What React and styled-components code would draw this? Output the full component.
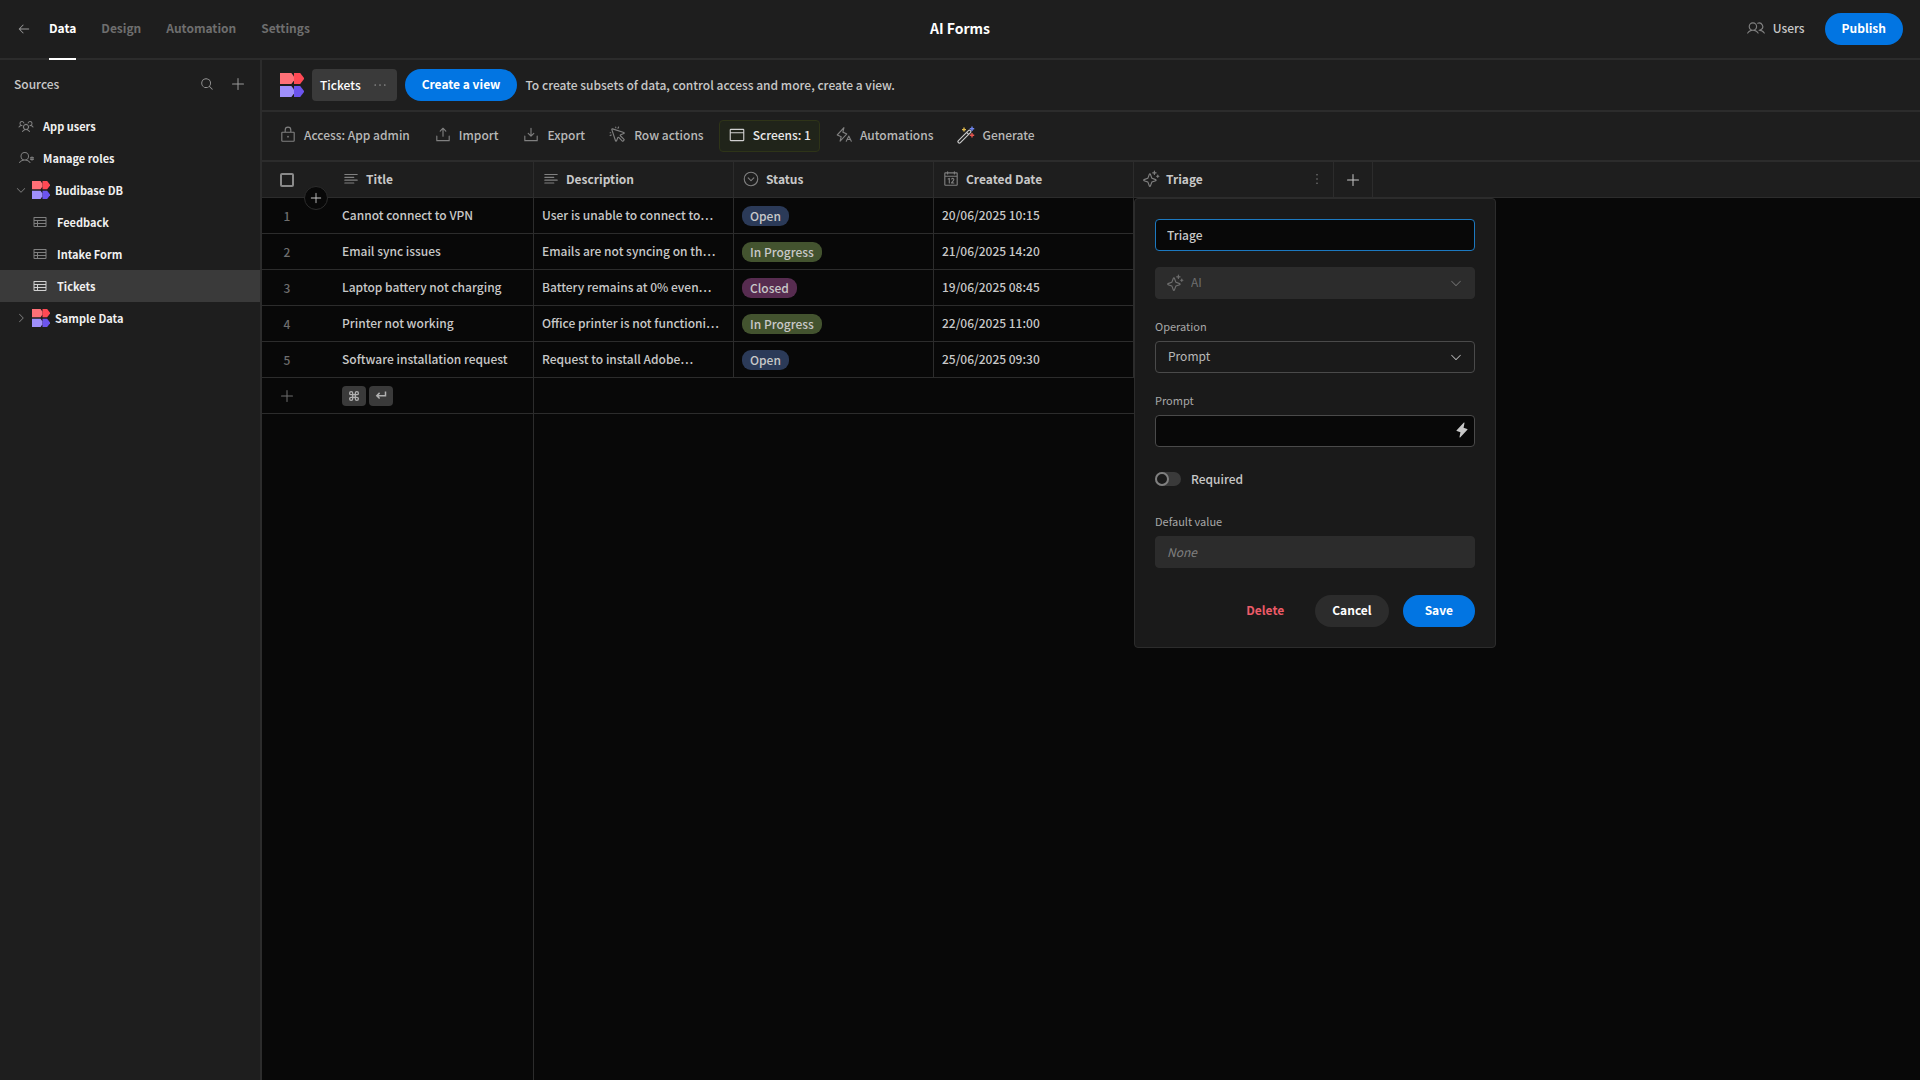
import React, { useState } from "react";
import styled, { createGlobalStyle } from "styled-components";
import {
  PiArrowLeft,
  PiBrowser,
  PiCalendar,
  PiCaretCircleDown,
  PiCaretDown,
  PiCaretRight,
  PiCommandBold,
  PiCursorClick,
  PiDotsThree,
  PiDotsThreeVertical,
  PiDownloadSimple,
  PiLightningA,
  PiLightningFill,
  PiLock,
  PiMagnifyingGlass,
  PiPlus,
  PiSparkle,
  PiTable,
  PiTextAlignLeft,
  PiUploadSimple,
  PiUserGear,
  PiUsers,
  PiUsersThree,
} from "react-icons/pi";

const tabs = ["Data", "Design", "Automation", "Settings"];

const tables = ["Feedback", "Intake Form", "Tickets"];

const rows = [
  {
    title: "Cannot connect to VPN",
    description: "User is unable to connect to…",
    status: "Open",
    created: "20/06/2025 10:15",
  },
  {
    title: "Email sync issues",
    description: "Emails are not syncing on th…",
    status: "In Progress",
    created: "21/06/2025 14:20",
  },
  {
    title: "Laptop battery not charging",
    description: "Battery remains at 0% even…",
    status: "Closed",
    created: "19/06/2025 08:45",
  },
  {
    title: "Printer not working",
    description: "Office printer is not functioni…",
    status: "In Progress",
    created: "22/06/2025 11:00",
  },
  {
    title: "Software installation request",
    description: "Request to install Adobe…",
    status: "Open",
    created: "25/06/2025 09:30",
  },
];

const statusColors = {
  Open: "#2b3a58",
  "In Progress": "#43532f",
  Closed: "#572c50",
};

const Logo = ({ size }) => (
  <svg width={size} height={size} viewBox="0 0 24 24" aria-hidden="true">
    <path d="M0 0h11.4l2.6 3.6v3.8L11.4 11H0z" fill="#ff7077" />
    <path d="M14 0h6.2L24 5v1l-3.8 5H14z" fill="#ff4954" />
    <path d="M0 13h11.4l2.6 3.6v3.8L11.4 24H0z" fill="#9f8ffb" />
    <path d="M14 13h6.2l3.8 5v1l-3.8 5H14z" fill="#6c54ee" />
  </svg>
);

const ReturnKey = () => (
  <svg width="14" height="14" viewBox="0 0 14 14" fill="none" aria-hidden="true">
    <path
      d="M11.5 2.5v4.2H2.8M5.6 3.9 2.8 6.7l2.8 2.8"
      stroke="currentColor"
      strokeWidth="1.5"
    />
  </svg>
);

const MagicWand = () => (
  <svg width="18" height="18" viewBox="0 0 18 18" fill="none" aria-hidden="true">
    <path
      d="M1.4 14.6 11.4 4.6a1.4 1.4 0 0 1 2 2L3.4 16.6a1.4 1.4 0 0 1-2-2zM9.6 6.4l2 2"
      stroke="#c8c8c8"
      strokeWidth="1.2"
    />
    <path d="M7 1.6v4M5 3.6h4" stroke="#e0b84c" strokeWidth="1.4" />
    <path d="M15 .6v4.4M12.8 2.8h4.4" stroke="#6f86f0" strokeWidth="1.4" />
    <path d="M15 7v4.4M12.8 9.2h4.4" stroke="#e8554e" strokeWidth="1.4" />
  </svg>
);

const TopBar = () => (
  <Header>
    <TopNav>
      <IconButton aria-label="Back">
        <PiArrowLeft size={14} />
      </IconButton>
      {tabs.map((tab) => (
        <Tab key={tab} href="#" $active={tab === "Data"}>
          {tab}
        </Tab>
      ))}
    </TopNav>
    <AppTitle>AI Forms</AppTitle>
    <TopActions>
      <UsersButton>
        <PiUsers size={18} />
        <span>Users</span>
      </UsersButton>
      <Button $variant="primary">Publish</Button>
    </TopActions>
  </Header>
);

const Sidebar = () => (
  <Aside>
    <SourcesHeader>
      <h2>Sources</h2>
      <IconButton aria-label="Search">
        <PiMagnifyingGlass size={14} />
      </IconButton>
      <IconButton aria-label="Add source">
        <PiPlus size={16} />
      </IconButton>
    </SourcesHeader>
    <nav>
      <NavItem href="#" $indent={18} $gap={9}>
        <PiUsersThree size={16} />
        App users
      </NavItem>
      <NavItem href="#" $indent={18} $gap={9}>
        <PiUserGear size={16} />
        Manage roles
      </NavItem>
      <NavItem href="#" $indent={15} $gap={5}>
        <PiCaretDown size={12} />
        <Logo size={18} />
        Budibase DB
      </NavItem>
      {tables.map((name) => (
        <NavItem
          key={name}
          href="#"
          $indent={32}
          $gap={9}
          $selected={name === "Tickets"}
        >
          <PiTable size={16} />
          {name}
        </NavItem>
      ))}
      <NavItem href="#" $indent={15} $gap={5}>
        <PiCaretRight size={12} />
        <Logo size={18} />
        Sample Data
      </NavItem>
    </nav>
  </Aside>
);

const ColumnEditor = () => {
  const [name, setName] = useState("Triage");
  const [prompt, setPrompt] = useState("");
  const [required, setRequired] = useState(false);

  return (
    <Popover onSubmit={(e) => e.preventDefault()}>
      <Input
        aria-label="Column name"
        value={name}
        $focused
        onChange={(e) => setName(e.target.value)}
      />
      <SelectBox $disabled>
        <PiSparkle size={18} />
        <select aria-label="Type" disabled>
          <option>AI</option>
        </select>
        <PiCaretDown size={14} />
      </SelectBox>
      <Field>
        <label htmlFor="operation">Operation</label>
        <SelectBox>
          <select id="operation">
            <option>Prompt</option>
          </select>
          <PiCaretDown size={14} />
        </SelectBox>
      </Field>
      <Field>
        <label htmlFor="prompt">Prompt</label>
        <InputWithButton>
          <Input
            id="prompt"
            value={prompt}
            onChange={(e) => setPrompt(e.target.value)}
          />
          <button type="button" aria-label="Bindings">
            <PiLightningFill size={16} />
          </button>
        </InputWithButton>
      </Field>
      <ToggleLabel>
        <Toggle
          type="checkbox"
          checked={required}
          onChange={(e) => setRequired(e.target.checked)}
        />
        Required
      </ToggleLabel>
      <Field>
        <label htmlFor="default">Default value</label>
        <Input id="default" placeholder="None" disabled />
      </Field>
      <PopoverActions>
        <Button type="button" $variant="danger">
          Delete
        </Button>
        <Button type="button" $variant="secondary">
          Cancel
        </Button>
        <Button type="submit" $variant="primary" $wide>
          Save
        </Button>
      </PopoverActions>
    </Popover>
  );
};

const Grid = () => (
  <GridWrapper>
    <Table>
      <colgroup>
        <col className="gutter" />
        <col className="data" />
        <col className="data" />
        <col className="data" />
        <col className="data" />
        <col className="data" />
        <col className="add" />
        <col />
      </colgroup>
      <thead>
        <tr>
          <HeadCell $plain>
            <GutterCell>
              <Checkbox type="checkbox" aria-label="Select all rows" />
            </GutterCell>
            <AddRowBadge aria-label="Insert row">
              <PiPlus size={14} />
            </AddRowBadge>
          </HeadCell>
          <HeadCell>
            <HeadLabel>
              <PiTextAlignLeft size={18} />
              Title
            </HeadLabel>
          </HeadCell>
          <HeadCell>
            <HeadLabel>
              <PiTextAlignLeft size={18} />
              Description
            </HeadLabel>
          </HeadCell>
          <HeadCell>
            <HeadLabel>
              <PiCaretCircleDown size={18} />
              Status
            </HeadLabel>
          </HeadCell>
          <HeadCell>
            <HeadLabel>
              <PiCalendar size={18} />
              Created Date
            </HeadLabel>
          </HeadCell>
          <HeadCell>
            <HeadLabel>
              <PiSparkle size={18} />
              <span>Triage</span>
              <IconButton aria-label="Column options">
                <PiDotsThreeVertical size={16} />
              </IconButton>
            </HeadLabel>
            <ColumnEditor />
          </HeadCell>
          <HeadCell>
            <AddColumn aria-label="Add column">
              <PiPlus size={16} />
            </AddColumn>
          </HeadCell>
          <HeadCell $plain />
        </tr>
      </thead>
      <tbody>
        {rows.map((row, i) => (
          <tr key={row.title}>
            <Cell $plain>
              <GutterCell>{i + 1}</GutterCell>
            </Cell>
            <Cell>
              <CellText>{row.title}</CellText>
            </Cell>
            <Cell>
              <CellText>{row.description}</CellText>
            </Cell>
            <Cell>
              <BadgeCell>
                <Badge $status={row.status}>{row.status}</Badge>
              </BadgeCell>
            </Cell>
            <Cell>
              <CellText>{row.created}</CellText>
            </Cell>
            <Cell />
          </tr>
        ))}
        <tr>
          <Cell $plain>
            <GutterCell>
              <PiPlus size={16} />
            </GutterCell>
          </Cell>
          <Cell>
            <Keys>
              <kbd>
                <PiCommandBold size={14} />
              </kbd>
              <kbd>
                <ReturnKey />
              </kbd>
            </Keys>
          </Cell>
          <Cell $plain colSpan={4} />
        </tr>
      </tbody>
    </Table>
    <StickyEdge />
  </GridWrapper>
);

const App = () => (
  <Page>
    <GlobalStyle />
    <TopBar />
    <Body>
      <Sidebar />
      <Main>
        <ViewBar>
          <Logo size={24} />
          <ViewTab>
            Tickets
            <PiDotsThree size={18} />
          </ViewTab>
          <Button $variant="primary">Create a view</Button>
          <p>
            To create subsets of data, control access and more, create a view.
          </p>
        </ViewBar>
        <Toolbar>
          <ToolButton>
            <PiLock size={18} />
            Access: App admin
          </ToolButton>
          <ToolButton>
            <PiUploadSimple size={18} />
            Import
          </ToolButton>
          <ToolButton>
            <PiDownloadSimple size={18} />
            Export
          </ToolButton>
          <ToolButton>
            <PiCursorClick size={18} />
            Row actions
          </ToolButton>
          <ToolButton $accent>
            <PiBrowser size={18} />
            Screens: 1
          </ToolButton>
          <ToolButton>
            <PiLightningA size={18} />
            Automations
          </ToolButton>
          <ToolButton>
            <MagicWand />
            Generate
          </ToolButton>
        </Toolbar>
        <Grid />
      </Main>
    </Body>
  </Page>
);

const GlobalStyle = createGlobalStyle`
  *, *::before, *::after {
    box-sizing: border-box;
  }

  body {
    margin: 0;
    background: #080808;
  }

  body, button, input, select {
    font-family: "Noto Sans CJK SC", "Noto Sans", sans-serif;
    font-size: 12px;
    line-height: 18px;
    font-weight: 500;
    color: #c8c8c8;
  }

  button {
    cursor: pointer;
  }

  svg {
    flex: none;
    display: block;
  }
`;

const Page = styled.div`
  display: flex;
  flex-direction: column;
  min-height: 100vh;
`;

const Header = styled.header`
  display: grid;
  grid-template-columns: 1fr auto 1fr;
  align-items: center;
  height: 60px;
  padding: 0 17px;
  background: #1e1e1e;
  border-bottom: 2px solid #2c2c2c;
`;

const TopNav = styled.nav`
  display: flex;
  align-items: center;
  gap: 25px;

  button {
    margin-right: -7px;
  }
`;

const IconButton = styled.button`
  display: flex;
  padding: 0;
  border: none;
  background: none;
  color: #9a9a9a;
`;

const Tab = styled.a`
  display: flex;
  align-items: center;
  height: 58px;
  padding-bottom: 2px;
  font-weight: 700;
  text-decoration: none;
  color: ${(props) => (props.$active ? "#fff" : "#6e6e6e")};
  box-shadow: ${(props) => (props.$active ? "0 2px 0 #fff" : "none")};
`;

const AppTitle = styled.h1`
  margin: 0;
  padding-bottom: 2px;
  font-size: 14px;
  line-height: 18px;
  font-weight: 700;
  color: #fff;
`;

const TopActions = styled.div`
  display: flex;
  align-items: center;
  justify-content: flex-end;
  gap: 20px;
`;

const UsersButton = styled(IconButton)`
  align-items: center;
  gap: 8px;
  padding-bottom: 2px;
  color: #808080;

  span {
    color: #c8c8c8;
  }
`;

const buttonColors = {
  primary: ["#0275e2", "#fff"],
  secondary: ["#2c2c2c", "#fff"],
  danger: ["transparent", "#ec5b68"],
};

const Button = styled.button`
  flex: none;
  height: 32px;
  padding: 0 ${(props) => (props.$wide ? 22 : 17)}px 2px;
  border: none;
  border-radius: 16px;
  font-weight: 700;
  background: ${(props) => buttonColors[props.$variant][0]};
  color: ${(props) => buttonColors[props.$variant][1]};
`;

const Body = styled.div`
  display: flex;
  flex: 1;
`;

const Aside = styled.aside`
  flex: none;
  width: 262px;
  background: #1e1e1e;
  border-right: 2px solid #2c2c2c;
`;

const SourcesHeader = styled.div`
  display: flex;
  align-items: center;
  gap: 16px;
  height: 50px;
  padding: 0 14px 2px;

  h2 {
    flex: 1;
    margin: 0;
    font-size: 12px;
    font-weight: 500;
  }
`;

const NavItem = styled.a`
  display: flex;
  align-items: center;
  gap: ${(props) => props.$gap}px;
  height: 32px;
  padding-left: ${(props) => props.$indent}px;
  font-size: 11px;
  font-weight: 700;
  text-decoration: none;
  color: #f0f0f0;
  background: ${(props) => (props.$selected ? "#3a3a3a" : "none")};

  svg {
    color: ${(props) => (props.$selected ? "#d0d0d0" : "#808080")};
  }
`;

const Main = styled.main`
  display: flex;
  flex-direction: column;
  flex: 1;
  min-width: 0;
`;

const ViewBar = styled.div`
  display: flex;
  align-items: center;
  gap: 8px;
  height: 52px;
  padding: 0 18px;
  background: #1e1e1e;
  border-bottom: 2px solid #2c2c2c;

  p {
    margin: 0;
  }
`;

const ViewTab = styled.button`
  display: flex;
  align-items: center;
  gap: 10px;
  height: 32px;
  padding: 0 8px;
  border: none;
  border-radius: 4px;
  background: #3a3a3a;
  color: #fff;

  svg {
    color: #8a8a8a;
  }
`;

const Toolbar = styled.div`
  display: flex;
  align-items: center;
  gap: 6px;
  height: 50px;
  padding: 0 8px;
  background: #1e1e1e;
  border-bottom: 2px solid #2c2c2c;
`;

const ToolButton = styled.button`
  display: flex;
  align-items: center;
  gap: 7px;
  height: 32px;
  padding: 0 8px 2px;
  border: 1px solid ${(props) => (props.$accent ? "#2e3418" : "transparent")};
  border-radius: 4px;
  background: ${(props) => (props.$accent ? "#20241a" : "none")};
  color: ${(props) => (props.$accent ? "#e8e8e8" : "#b8b8b8")};

  svg {
    color: ${(props) => (props.$accent ? "#d0d0d0" : "#808080")};
  }
`;

const GridWrapper = styled.div`
  display: flex;
  flex-direction: column;
  flex: 1;
  background: #080808;
`;

const Table = styled.table`
  width: 100%;
  table-layout: fixed;
  border-collapse: separate;
  border-spacing: 0;

  .gutter {
    width: 72px;
  }

  .data {
    width: 200px;
  }

  .add {
    width: 39px;
  }
`;

const Cell = styled.td`
  height: 36px;
  padding: 0;
  border-bottom: 1px solid #2c2c2c;
  border-right: ${(props) => (props.$plain ? "none" : "1px solid #2c2c2c")};
`;

const HeadCell = styled(Cell).attrs({ as: "th" })`
  position: relative;
  background: #1e1e1e;
  text-align: left;
  font-weight: 500;
`;

const HeadLabel = styled.div`
  display: flex;
  align-items: center;
  gap: 6px;
  padding: 0 8px 2px;
  font-weight: 700;

  svg {
    color: #808080;
  }

  span {
    flex: 1;
  }
`;

const GutterCell = styled.div`
  display: flex;
  justify-content: center;
  width: 50px;
  color: #6e6e6e;
`;

const Checkbox = styled.input`
  appearance: none;
  width: 14px;
  height: 14px;
  margin: 0;
  border: 2px solid #8a8a8a;
  border-radius: 2px;

  &:checked {
    background: #8a8a8a;
  }
`;

const AddRowBadge = styled.button`
  position: absolute;
  z-index: 1;
  left: 42px;
  bottom: -13px;
  display: flex;
  align-items: center;
  justify-content: center;
  width: 24px;
  height: 24px;
  padding: 0;
  border: 1px solid #2c2c2c;
  border-radius: 50%;
  background: #080808;
`;

const AddColumn = styled(IconButton)`
  margin: 0 auto;
  color: #c8c8c8;
`;

const CellText = styled.div`
  padding: 0 8px 2px;
  overflow: hidden;
  white-space: nowrap;
  text-overflow: ellipsis;
`;

const BadgeCell = styled.div`
  display: flex;
  padding: 0 8px;
`;

const Badge = styled.span`
  height: 20px;
  padding: 0 8px;
  border-radius: 9px;
  line-height: 20px;
  background: ${(props) => statusColors[props.$status]};
`;

const Keys = styled.div`
  display: flex;
  gap: 3px;
  padding: 0 8px;

  kbd {
    display: flex;
    align-items: center;
    justify-content: center;
    width: 24px;
    height: 20px;
    border-radius: 4px;
    background: #3a3a3a;
    color: #b0b0b0;
  }
`;

const StickyEdge = styled.div`
  flex: 1;
  width: 272px;
  border-right: 1px solid #2c2c2c;
`;

const Popover = styled.form`
  position: absolute;
  z-index: 2;
  top: calc(100% + 1px);
  left: 0;
  display: flex;
  flex-direction: column;
  gap: 16px;
  width: 362px;
  padding: 20px;
  border: 1px solid #2c2c2c;
  border-radius: 4px;
  background: #1a1a1a;
`;

const Input = styled.input`
  display: block;
  width: 100%;
  height: 32px;
  padding: 0 11px 2px;
  border: 1px solid ${(props) => (props.$focused ? "#1c79c0" : "#4a4a4a")};
  border-radius: 4px;
  outline: none;
  background: #080808;

  &:disabled {
    border-color: #2c2c2c;
    background: #2c2c2c;
  }

  &::placeholder {
    color: #808080;
    font-style: italic;
    font-weight: 400;
    opacity: 1;
  }
`;

const SelectBox = styled.div`
  position: relative;

  select {
    appearance: none;
    display: block;
    width: 100%;
    height: 32px;
    padding: 0 ${(props) => (props.$disabled ? 35 : 12)}px 2px;
    border: 1px solid ${(props) => (props.$disabled ? "#2c2c2c" : "#4a4a4a")};
    border-radius: 4px;
    font-weight: 400;
    background: ${(props) => (props.$disabled ? "#2c2c2c" : "#1a1a1a")};
    color: ${(props) => (props.$disabled ? "#6e6e6e" : "#b8b8b8")};
    opacity: 1;
  }

  svg {
    position: absolute;
    top: 9px;
    right: 12px;
    pointer-events: none;
    color: ${(props) => (props.$disabled ? "#6e6e6e" : "#b8b8b8")};
  }

  svg:first-child {
    top: 7px;
    left: 11px;
  }
`;

const Field = styled.div`
  display: flex;
  flex-direction: column;
  gap: 6px;

  label {
    padding-top: 2px;
    font-size: 11px;
    line-height: 18px;
    font-weight: 400;
    color: #a8a8a8;
  }
`;

const InputWithButton = styled.div`
  position: relative;

  button {
    position: absolute;
    top: 0;
    right: 5px;
    display: flex;
    align-items: center;
    height: 30px;
    padding: 0;
    border: none;
    background: none;
  }
`;

const ToggleLabel = styled.label`
  display: flex;
  align-items: center;
  gap: 10px;
  padding: 7px 0 6px;
`;

const Toggle = styled.input`
  appearance: none;
  width: 26px;
  height: 14px;
  margin: 0;
  border-radius: 7px;
  background: #3a3a3a;

  &::before {
    content: "";
    display: block;
    width: 14px;
    height: 14px;
    border: 2px solid #808080;
    border-radius: 50%;
    background: #1a1a1a;
  }

  &:checked::before {
    margin-left: auto;
  }
`;

const PopoverActions = styled.div`
  display: flex;
  justify-content: flex-end;
  gap: 14px;
  padding-top: 11px;
`;

export default App;
